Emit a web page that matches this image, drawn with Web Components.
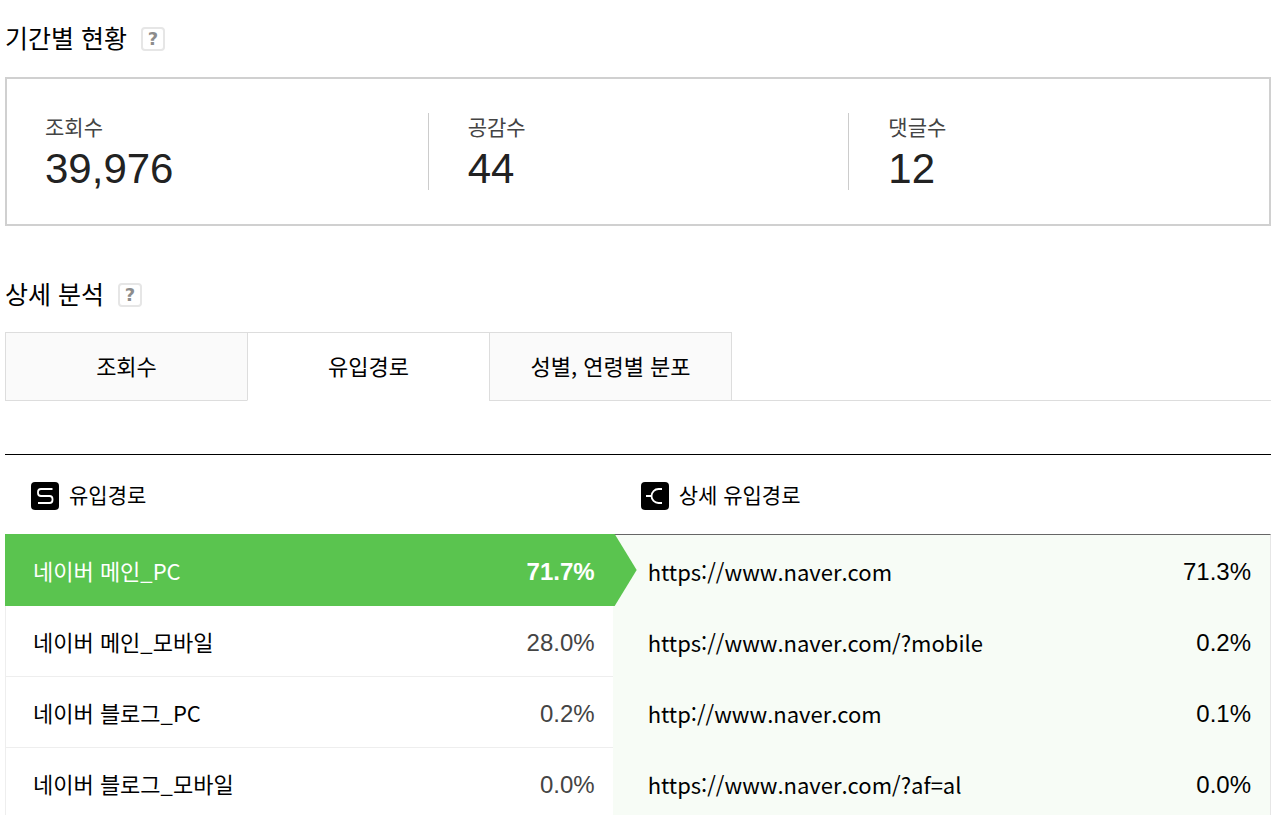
<!DOCTYPE html>
<html lang="ko">
<head>
<meta charset="utf-8">
<meta name="viewport" content="width=device-width, initial-scale=1">
<title>유입경로</title>
<style>
    body {
        margin: 0;
        padding: 19px 9px 0 5px;
        background: #fff;
        color: #000;
        font-family: "Noto Sans CJK KR", sans-serif;
        --number-font: "Liberation Sans", Arial, sans-serif;
        --green: #5ac44f;
    }

    stat-box {
        margin: 22px 0 49px;
    }

    tab-bar {
        margin: 21px 0 53px;
    }
</style>
</head>
<body>
    <section-title>기간별 현황</section-title>
    <stat-box>
        <stat-item label="조회수">39,976</stat-item>
        <stat-item label="공감수">44</stat-item>
        <stat-item label="댓글수">12</stat-item>
    </stat-box>

    <section-title>상세 분석</section-title>
    <tab-bar items='["조회수", "유입경로", "성별, 연령별 분포"]' selected="1"></tab-bar>

    <path-panel>
        <path-table label="유입경로" selected="0" items='[
            {"name": "네이버 메인_PC", "percent": "71.7"},
            {"name": "네이버 메인_모바일", "percent": "28.0"},
            {"name": "네이버 블로그_PC", "percent": "0.2"},
            {"name": "네이버 블로그_모바일", "percent": "0.0"}
        ]'>
            <svg slot="icon" width="28" height="28" viewBox="0 0 28 28" fill="none" stroke="#fff" stroke-width="1.800">
                <rect width="28" height="28" rx="4" fill="#000" stroke="none"/>
                <path d="M21.500 7H10a3 3 0 0 0-3 3v1a3 3 0 0 0 3 3H18.500a3 3 0 0 1 3 3v1a3 3 0 0 1-3 3H7"/>
            </svg>
        </path-table>
        <path-table class="detail" label="상세 유입경로" items='[
            {"name": "https://www.naver.com", "percent": "71.3"},
            {"name": "https://www.naver.com/?mobile", "percent": "0.2"},
            {"name": "http://www.naver.com", "percent": "0.1"},
            {"name": "https://www.naver.com/?af=al", "percent": "0.0"}
        ]'>
            <svg slot="icon" width="28" height="28" viewBox="0 0 28 28" fill="none" stroke="#fff" stroke-width="1.800">
                <rect width="28" height="28" rx="4" fill="#000" stroke="none"/>
                <path d="M21 7h-3.500a7 7 0 0 0 0 14H21M5 14h5.500"/>
            </svg>
        </path-table>
    </path-panel>

<script>
class SectionTitle extends HTMLElement {
    constructor() {
        super();
        this.attachShadow({mode: 'open'}).innerHTML = `
        <style>
            :host {
                display: flex;
                align-items: center;
                gap: 14px;
            }

            h2 {
                margin: 0;
                font-size: 25px;
                font-weight: 400;
                line-height: 36px;
            }

            button {
                width: 24px;
                height: 24px;
                margin-top: 4px;
                padding: 0;
                border: 2px solid #e6e6e6;
                border-radius: 4px;
                background: #fff;
                color: #8c8c8c;
                font: bold 18px/20px "DejaVu Sans", sans-serif;
            }
        </style>
        <h2><slot></slot></h2>
        <button type="button">?</button>`;
    }
}

class StatBox extends HTMLElement {
    constructor() {
        super();
        this.attachShadow({mode: 'open'}).innerHTML = `
        <style>
            :host {
                display: grid;
                grid-template-columns: repeat(3, 1fr);
                padding: 34px 0;
                border: 2px solid #d0d0d0;
            }

            ::slotted(:not(:first-child)) {
                padding-left: 39px;
                border-left: 1px solid #ccc;
            }
        </style>
        <slot></slot>`;
    }
}

class StatItem extends HTMLElement {
    constructor() {
        super();
        this.attachShadow({mode: 'open'}).innerHTML = `
        <style>
            :host {
                display: block;
                padding-left: 38px;
            }

            .label {
                color: #444;
                font-size: 21px;
                line-height: 26px;
            }

            .value {
                margin-top: 8px;
                color: #222;
                font: 42px/43px var(--number-font);
            }
        </style>
        <div class="label">${this.getAttribute('label')}</div>
        <div class="value"><slot></slot></div>`;
    }
}

class TabBar extends HTMLElement {
    constructor() {
        super();
        const items = JSON.parse(this.getAttribute('items'));
        const selected = Number(this.getAttribute('selected'));

        this.attachShadow({mode: 'open'}).innerHTML = `
        <style>
            :host {
                display: flex;
            }

            button {
                width: 242px;
                height: 69px;
                padding: 0 0 4px;
                border: 1px solid #ddd;
                border-right-width: 0;
                background: #fafafa;
                color: #000;
                font: inherit;
                font-size: 22px;
            }

            button:last-of-type {
                width: 243px;
                border-right-width: 1px;
            }

            button[aria-selected="true"] {
                border-bottom-color: #fff;
                background: #fff;
            }

            .rest {
                flex: 1;
                border-bottom: 1px solid #ddd;
            }
        </style>
        ${items.map((name, i) => `<button type="button" role="tab" aria-selected="${i === selected}">${name}</button>`).join('')}
        <div class="rest"></div>`;
        this.setAttribute('role', 'tablist');
    }
}

class PathPanel extends HTMLElement {
    constructor() {
        super();
        this.attachShadow({mode: 'open'}).innerHTML = `
        <style>
            :host {
                display: grid;
                grid-template-columns: 48fr 52fr;
                border-top: 1px solid #000;
            }
        </style>
        <slot></slot>`;
    }
}

class PathTable extends HTMLElement {
    constructor() {
        super();
        this.getRowsHtml = this.getRowsHtml.bind(this);

        const items = JSON.parse(this.getAttribute('items'));
        const selected = this.getAttribute('selected');

        this.attachShadow({mode: 'open'}).innerHTML = `
        <style>
            :host {
                display: block;
            }

            h3 {
                display: flex;
                align-items: center;
                gap: 10px;
                height: 79px;
                margin: 0;
                padding: 3px 26px 0;
                box-sizing: border-box;
                font-size: 21px;
                font-weight: 400;
            }

            h3 span {
                padding-bottom: 4px;
            }

            table {
                width: 100%;
                border-spacing: 0;
            }

            th, td {
                height: 71px;
                padding: 0;
                box-sizing: border-box;
                border-bottom: 1px solid #eee;
                font-size: 22px;
                font-weight: 400;
                line-height: 34px;
            }

            th {
                padding-left: 27px;
                border-left: 1px solid #eee;
                text-align: left;
            }

            td {
                padding: 3px 18px 0 0;
                color: #444;
                font-family: var(--number-font);
                font-size: 24px;
                text-align: right;
            }

            .selected th, .selected td {
                height: 72px;
                border-bottom: 0;
                border-color: var(--green);
                background: var(--green);
                color: #fff;
            }

            .selected td {
                position: relative;
                font-weight: 700;
            }

            /* arrow pointing into the detail list */
            .selected td::after {
                content: "";
                position: absolute;
                top: 0;
                left: 100%;
                width: 24px;
                height: 100%;
                background: var(--green);
                clip-path: polygon(0 0, 2px 0, 100% 50%, 2px 100%, 0 100%);
            }

            :host(.detail) h3 {
                padding-left: 28px;
            }

            :host(.detail) table {
                border-top: 1px solid #666;
                border-right: 1px solid #e6e6e6;
                background: #f7fcf6;
            }

            :host(.detail) th, :host(.detail) td {
                border: 0;
                color: #000;
            }

            :host(.detail) th {
                padding-left: 35px;
            }

            :host(.detail) td {
                padding-right: 19px;
            }
        </style>
        <h3 id="title"><slot name="icon"></slot><span>${this.getAttribute('label')}</span></h3>
        <table aria-labelledby="title">${this.getRowsHtml(items, selected)}</table>`;
    }

    getRowsHtml(items, selected) {
        return items.map((item, i) => `
            <tr class="${String(i) === selected ? 'selected' : ''}">
                <th scope="row">${item.name}</th>
                <td>${item.percent}%</td>
            </tr>`).join('');
    }
}

customElements.define('section-title', SectionTitle);
customElements.define('stat-box', StatBox);
customElements.define('stat-item', StatItem);
customElements.define('tab-bar', TabBar);
customElements.define('path-panel', PathPanel);
customElements.define('path-table', PathTable);
</script>
</body>
</html>
